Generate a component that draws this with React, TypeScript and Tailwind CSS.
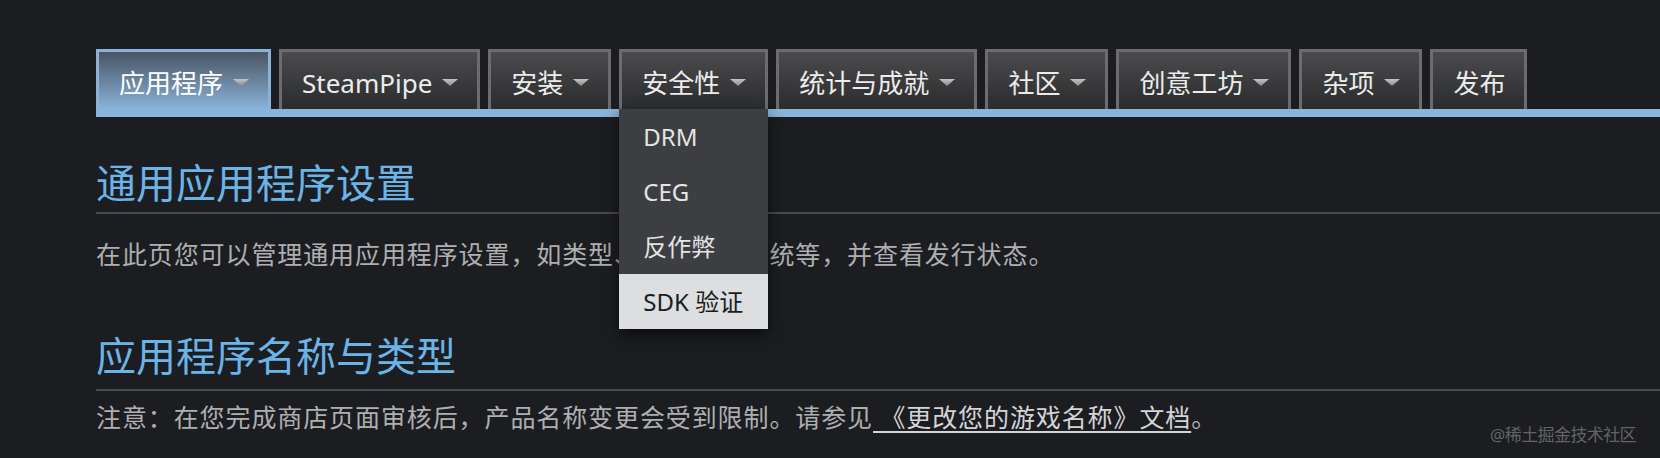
import React from 'react';

type Tab = { label: string; arrow: boolean; active?: boolean; open?: boolean };

const tabs: Tab[] = [
  { label: '应用程序', arrow: true, active: true },
  { label: 'SteamPipe', arrow: true },
  { label: '安装', arrow: true },
  { label: '安全性', arrow: true, open: true },
  { label: '统计与成就', arrow: true },
  { label: '社区', arrow: true },
  { label: '创意工坊', arrow: true },
  { label: '杂项', arrow: true },
  { label: '发布', arrow: false },
];

const menu = ['DRM', 'CEG', '反作弊', 'SDK 验证'];

function Arrow() {
  return (
    <svg width="16" height="7" viewBox="0 0 16 7" className="shrink-0">
      <defs>
        <linearGradient id="arr" x1="0" y1="0" x2="0" y2="1">
          <stop offset="0" stopColor="#c4c4c4" />
          <stop offset="1" stopColor="#8a8a8a" />
        </linearGradient>
      </defs>
      <polygon points="0,0 16,0 8,7" fill="url(#arr)" />
    </svg>
  );
}

export default function App() {
  return (
    <div className="relative h-[458px] w-full overflow-hidden bg-[#1c1d21] pl-[96px] pt-[49px] font-['Noto_Sans','Noto_Sans_CJK_SC',sans-serif]">
      {/* top tab bar */}
      <nav className="flex gap-2">
        {tabs.map((t) => (
          <div key={t.label} className="relative">
            <div
              className={`flex h-[60px] items-center gap-[10px] border-[3px] border-b-0 pl-[20px] pr-[19px] pt-1 text-[26px] leading-none ${
                t.active
                  ? 'border-[#8bb3d8] bg-gradient-to-b from-[#4a5565] to-[#8ab4da] text-white'
                  : 'border-[#6c6c6e] bg-gradient-to-b from-[#4b4b4d] to-[#2b2c2e] text-[#ececec]'
              }`}
            >
              <span>{t.label}</span>
              {t.arrow && <Arrow />}
            </div>
            {t.open && (
              <div className="absolute left-0 right-0 top-full z-10 bg-[#3d3e41] shadow-[0_6px_14px_rgba(0,0,0,0.6)]">
                {menu.map((m, i) => (
                  <div
                    key={m}
                    className={`flex h-[55px] items-center px-[24px] text-[24px] ${
                      i === menu.length - 1 ? 'bg-[#dcdee0] text-[#1b1c1f]' : 'text-[#e4e4e6]'
                    }`}
                  >
                    {m}
                  </div>
                ))}
              </div>
            )}
          </div>
        ))}
      </nav>
      <div className="h-[8px] bg-[#89b4db]" />

      {/* general settings */}
      <h2 className="mt-[42px] border-b-2 border-[#4a4b4f] pb-[5px] text-[40px] leading-[48px] font-normal text-[#6ab4e8]">
        通用应用程序设置
      </h2>
      <p className="mt-[23px] text-[25px] leading-[34px] tracking-[0.9px] text-[#aeafb1]">
        在此页您可以管理通用应用程序设置，如类型、支持操作系统等，并查看发行状态。
      </p>

      {/* name and type */}
      <h2 className="mt-[61px] border-b-2 border-[#4a4b4f] pb-[9px] text-[40px] leading-[48px] font-normal text-[#6ab4e8]">
        应用程序名称与类型
      </h2>
      <p className="mt-[9px] text-[25px] leading-[34px] tracking-[0.9px] text-[#aeafb1]">
        注意：在您完成商店页面审核后，产品名称变更会受到限制。请参见
        <a className="text-[#d4d5d7] underline underline-offset-4"> 《更改您的游戏名称》文档</a>。
      </p>

      <div className="absolute bottom-[11px] right-[24px] text-[17px] tracking-[-0.6px] text-[#626367]">
        @稀土掘金技术社区
      </div>
    </div>
  );
}
